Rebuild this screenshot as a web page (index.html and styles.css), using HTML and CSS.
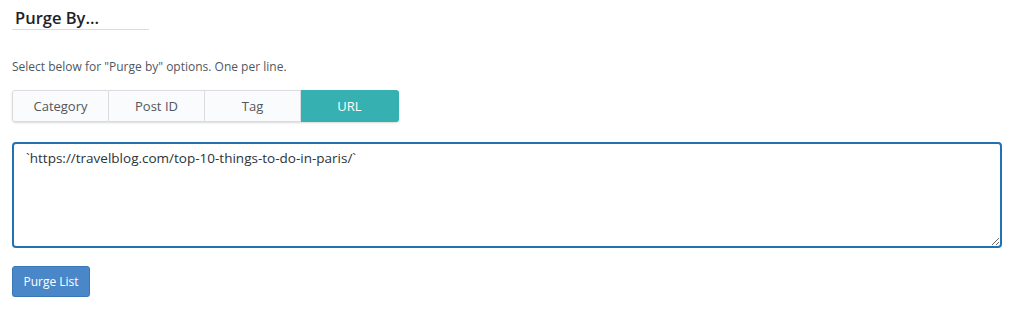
FILE: index.html
```html
<!DOCTYPE html>
<html lang="en">
<head>
    <meta charset="UTF-8">
    <meta name="viewport" content="width=device-width, initial-scale=1.0">
    <title>Purge By</title>
    <link rel="stylesheet" href="styles.css">
</head>
<body>
    <div class="purge">
        <h3 class="purge-title">Purge By...</h3>
        <p class="purge-desc">Select below for "Purge by" options. One per line.</p>

        <div class="tabs">
            <button class="tab">Category</button>
            <button class="tab">Post ID</button>
            <button class="tab">Tag</button>
            <button class="tab tab-active">URL</button>
        </div>

        <textarea class="purge-list" spellcheck="false">`https://travelblog.com/top-10-things-to-do-in-paris/`</textarea>

        <button class="btn-purge">Purge List</button>
    </div>
</body>
</html>
```

FILE: styles.css
```css
* {
    margin: 0;
    padding: 0;
    box-sizing: border-box;
}

body {
    font-family: 'Open Sans', 'Noto Sans', sans-serif;
    background: #fff;
    color: #3c434a;
}

.purge {
    padding: 8px 22px 0 12px;
    display: flex;
    flex-direction: column;
    align-items: flex-start;
}

.purge-title {
    font-size: 16.5px;
    font-weight: 600;
    color: #1d2327;
    padding: 0 0 1px 3px;
    width: 137px;
    border-bottom: 1px solid #ddd;
    line-height: 20px;
}

.purge-desc {
    font-size: 12px;
    color: #50575e;
    margin-top: 29px;
    line-height: 16px;
}

.tabs {
    display: flex;
    margin-top: 15px;
    border-radius: 3px;
    box-shadow: 0 1px 2px rgba(0, 0, 0, 0.15);
}

.tab {
    width: 96px;
    height: 32px;
    border: 1px solid #dcdcde;
    border-left: none;
    background: #fafbfc;
    color: #50575e;
    font-family: inherit;
    font-size: 13px;
    cursor: pointer;
}

.tab:first-child {
    width: 97px;
    border-left: 1px solid #dcdcde;
    border-radius: 3px 0 0 3px;
}

.tab-active {
    width: 98px;
    background: #36b0b0;
    border-color: #36b0b0;
    color: #fff;
    border-radius: 0 3px 3px 0;
}

.purge-list {
    width: 990px;
    height: 106px;
    margin-top: 20px;
    padding: 4px 12px;
    border: 2px solid #2271b1;
    border-radius: 4px;
    font-family: inherit;
    font-size: 13.5px;
    color: #2c3338;
    line-height: 20px;
    outline: none;
    resize: vertical;
}

.btn-purge {
    margin-top: 18px;
    width: 78px;
    height: 31px;
    background: #4a87c8;
    border: 1px solid #3b76b6;
    border-radius: 3px;
    color: #fff;
    font-family: inherit;
    font-size: 12px;
    box-shadow: 0 1px 1px rgba(0, 0, 0, 0.1);
    cursor: pointer;
}
```
